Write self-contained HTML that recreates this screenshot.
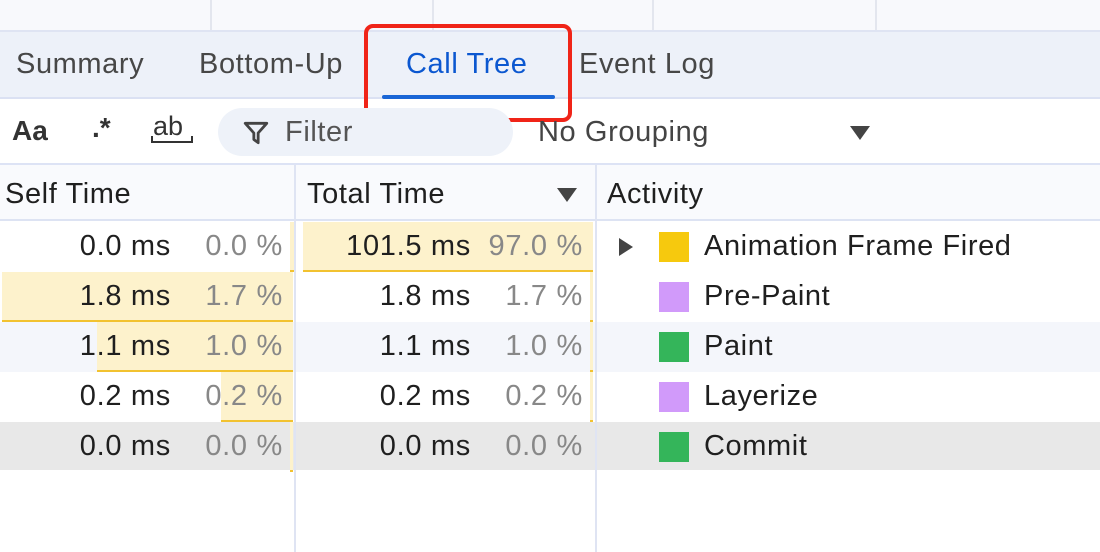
<!DOCTYPE html><html><head><style>
body{margin:0;width:1100px;height:552px;overflow:hidden;background:#fff;font-family:"Liberation Sans",sans-serif;color:#1f1f1f;position:relative}
.a{position:absolute}
.t{font-size:29px;letter-spacing:0.6px;white-space:nowrap}
.num{position:absolute;font-size:29px;letter-spacing:0.7px;text-align:right;white-space:nowrap}
.g{color:#888}
.bar{position:absolute;background:#fdf2cc;border-bottom:2px solid #f2c230;height:48px}
.sw{position:absolute;left:659px;width:30px;height:30px}
</style></head><body>
<div class="a" style="left:0;top:0;width:1100px;height:30px;background:#f8f9fc;border-bottom:2px solid #dfe4f3"></div>
<div class="a" style="left:210px;top:0;width:2px;height:30px;background:#e3e6ee"></div>
<div class="a" style="left:432px;top:0;width:2px;height:30px;background:#e3e6ee"></div>
<div class="a" style="left:652px;top:0;width:2px;height:30px;background:#e3e6ee"></div>
<div class="a" style="left:875px;top:0;width:2px;height:30px;background:#e3e6ee"></div>
<div class="a" style="left:0;top:32px;width:1100px;height:65px;background:#edf1f9;border-bottom:2px solid #dbe1f3"></div>
<div class="a t" style="left:16px;top:48px;color:#474747">Summary</div>
<div class="a t" style="left:199px;top:48px;color:#474747">Bottom-Up</div>
<div class="a t" style="left:406px;top:48px;color:#0b57d0">Call Tree</div>
<div class="a" style="left:382px;top:95px;width:173px;height:4px;background:#1a66d6;border-radius:2px"></div>
<div class="a t" style="left:579px;top:48px;color:#474747">Event Log</div>
<div class="a" style="left:364px;top:24px;width:200px;height:90px;border:4px solid #f02418;border-radius:9px"></div>
<div class="a" style="left:0;top:99px;width:1100px;height:64px;border-bottom:2px solid #dde3f5"></div>
<div class="a" style="left:12px;top:115px;font-size:28px;font-weight:bold;color:#333">Aa</div>
<div class="a" style="left:92px;top:112px;font-size:28px;font-weight:bold;color:#333">.*</div>
<div class="a" style="left:153px;top:111px;font-size:27px;color:#333">ab</div>
<div class="a" style="left:151px;top:136px;width:38px;height:5px;border:2px solid #333;border-top:none"></div>
<div class="a" style="left:218px;top:108px;width:295px;height:48px;background:#eef2f9;border-radius:24px"></div>
<svg class="a" style="left:242px;top:119px" width="28" height="28" viewBox="0 0 26 26"><path d="M3 4H23L15 13V22L11 19V13Z" fill="none" stroke="#444" stroke-width="2.6" stroke-linejoin="round"/></svg>
<div class="a t" style="left:285px;top:116px;color:#555">Filter</div>
<div class="a t" style="left:538px;top:116px;color:#444">No Grouping</div>
<svg class="a" style="left:849px;top:125px" width="22" height="16"><path d="M1 1H21L11 15Z" fill="#444"/></svg>
<div class="a" style="left:0;top:165px;width:1100px;height:54px;background:#f9fafd;border-bottom:2px solid #dde3f3"></div>
<div class="a t" style="left:5px;top:178px">Self Time</div>
<div class="a t" style="left:307px;top:178px">Total Time</div>
<svg class="a" style="left:556px;top:187px" width="22" height="16"><path d="M1 1H21L11 15Z" fill="#444"/></svg>
<div class="a t" style="left:607px;top:178px">Activity</div>
<div class="a" style="left:0;top:322px;width:1100px;height:50px;background:#f4f6fb"></div>
<div class="a" style="left:0;top:422px;width:1100px;height:48px;background:#e8e8e8"></div>
<div class="bar" style="left:290px;top:222px;width:4px"></div>
<div class="bar" style="left:303px;top:222px;width:290px"></div>
<div class="bar" style="left:2px;top:272px;width:291px"></div>
<div class="bar" style="left:590px;top:272px;width:3px"></div>
<div class="bar" style="left:97px;top:322px;width:196px"></div>
<div class="bar" style="left:590px;top:322px;width:3px"></div>
<div class="bar" style="left:221px;top:372px;width:72px"></div>
<div class="bar" style="left:590px;top:372px;width:3px"></div>
<div class="bar" style="left:290px;top:422px;width:3px"></div>
<div class="a" style="left:294px;top:165px;width:2px;height:387px;background:#dfe4f3"></div>
<div class="a" style="left:595px;top:165px;width:2px;height:387px;background:#dfe4f3"></div>
<div class="num" style="right:929px;top:230px">0.0 ms</div><div class="num g" style="right:817px;top:230px">0.0 %</div>
<div class="num" style="right:629px;top:230px">101.5 ms</div><div class="num g" style="right:517px;top:230px">97.0 %</div>
<div class="num" style="right:929px;top:280px">1.8 ms</div><div class="num g" style="right:817px;top:280px">1.7 %</div>
<div class="num" style="right:629px;top:280px">1.8 ms</div><div class="num g" style="right:517px;top:280px">1.7 %</div>
<div class="num" style="right:929px;top:330px">1.1 ms</div><div class="num g" style="right:817px;top:330px">1.0 %</div>
<div class="num" style="right:629px;top:330px">1.1 ms</div><div class="num g" style="right:517px;top:330px">1.0 %</div>
<div class="num" style="right:929px;top:380px">0.2 ms</div><div class="num g" style="right:817px;top:380px">0.2 %</div>
<div class="num" style="right:629px;top:380px">0.2 ms</div><div class="num g" style="right:517px;top:380px">0.2 %</div>
<div class="num" style="right:929px;top:430px">0.0 ms</div><div class="num g" style="right:817px;top:430px">0.0 %</div>
<div class="num" style="right:629px;top:430px">0.0 ms</div><div class="num g" style="right:517px;top:430px">0.0 %</div>
<svg class="a" style="left:618px;top:237px" width="16" height="20"><path d="M1 1L15 10L1 19Z" fill="#444"/></svg>
<div class="sw" style="top:232px;background:#f6c90e"></div><div class="a t" style="left:704px;top:230px">Animation Frame Fired</div>
<div class="sw" style="top:282px;background:#d19afa"></div><div class="a t" style="left:704px;top:280px">Pre-Paint</div>
<div class="sw" style="top:332px;background:#34b55a"></div><div class="a t" style="left:704px;top:330px">Paint</div>
<div class="sw" style="top:382px;background:#d19afa"></div><div class="a t" style="left:704px;top:380px">Layerize</div>
<div class="sw" style="top:432px;background:#34b55a"></div><div class="a t" style="left:704px;top:430px">Commit</div>
</body></html>
